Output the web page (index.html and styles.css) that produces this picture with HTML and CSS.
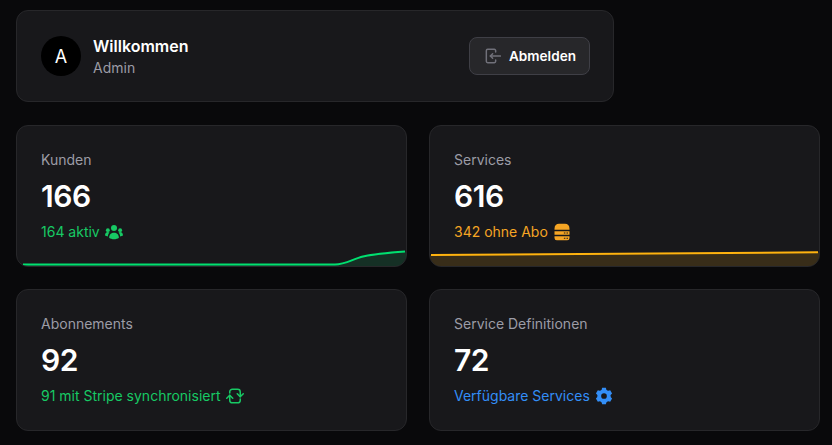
FILE: index.html
```html
<!DOCTYPE html>
<html lang="de">
  <head>
    <title>Dashboard</title>
    <meta charset="UTF-8" />
    <meta name="viewport" content="width=device-width, initial-scale=1.0" />
    <link rel="stylesheet" href="styles.css">
  </head>
  <body>
    <div class="page">
      <div class="welcome-card">
        <div class="user">
          <div class="avatar">A</div>
          <div>
            <p class="user-title">Willkommen</p>
            <p class="user-role">Admin</p>
          </div>
        </div>
        <button class="logout-button">
          <svg class="logout-icon" viewBox="0 0 24 24" fill="none" stroke="currentColor" stroke-width="2.2" stroke-linecap="round" stroke-linejoin="round">
            <path d="M16 6V4a2 2 0 0 0-2-2H4a2 2 0 0 0-2 2v16a2 2 0 0 0 2 2h10a2 2 0 0 0 2-2v-2"/>
            <path d="M23 12H8"/>
            <path d="M11.500 8.500L8 12l3.500 3.500"/>
          </svg>
          Abmelden
        </button>
      </div>

      <div class="stats-grid">
        <div class="stat-card">
          <p class="stat-label">Kunden</p>
          <p class="stat-value">166</p>
          <p class="stat-note green">164 aktiv
            <svg class="note-icon" viewBox="0 0 24 24" fill="currentColor">
              <circle cx="12" cy="6.500" r="4"/>
              <circle cx="3.800" cy="9.500" r="2.600"/>
              <circle cx="20.200" cy="9.500" r="2.600"/>
              <path d="M5.500 19.500c0-3.800 2.800-6.500 6.500-6.500s6.500 2.700 6.500 6.500c-1.500 1.300-4 2-6.500 2s-5-.7-6.500-2z"/>
              <path d="M3.800 18C2.200 17.800 1 17.300 0 16.700c0-2.700 1.500-4.700 3.800-4.700.9 0 1.600.3 2.200.7-1.300 1.300-2 3.100-2.200 5.300z"/>
              <path d="M20.200 18c1.600-.2 2.800-.7 3.800-1.300 0-2.700-1.500-4.700-3.800-4.700-.9 0-1.600.3-2.200.7 1.300 1.300 2 3.100 2.200 5.300z"/>
            </svg>
          </p>
          <svg class="spark" viewBox="0 0 389 30" preserveAspectRatio="none">
            <path class="spark-fill-green" d="M0 28.500H318C328 28.500 336 23 346 20.500C358 17.800 374 16.500 389 15.500V30H0Z"/>
            <path class="spark-line-green" d="M6 28.500H318C328 28.500 336 23 346 20.500C358 17.800 374 16.500 388 15.500"/>
          </svg>
        </div>

        <div class="stat-card">
          <p class="stat-label">Services</p>
          <p class="stat-value">616</p>
          <p class="stat-note orange">342 ohne Abo
            <svg class="note-icon" viewBox="0 0 24 24" fill="currentColor">
              <path d="M8 1h8c3.500 0 6 2.500 6 6.500V9H2V7.500C2 3.500 4.500 1 8 1z"/>
              <path fill-rule="evenodd" d="M2 11h20v4.500H2zM14.500 12.500v1.500h2v-1.500zM18 12.500v1.500h2v-1.500z"/>
              <path fill-rule="evenodd" d="M2 17.500h20V20a3 3 0 0 1-3 3H5a3 3 0 0 1-3-3zM14.500 19.500V21h2v-1.500zM18 19.500V21h2v-1.500z"/>
            </svg>
          </p>
          <svg class="spark" viewBox="0 0 389 30" preserveAspectRatio="none">
            <path class="spark-fill-orange" d="M0 19L389 16.300V30H0Z"/>
            <path class="spark-line-orange" d="M1 19L388 16.300"/>
          </svg>
        </div>

        <div class="stat-card">
          <p class="stat-label">Abonnements</p>
          <p class="stat-value">92</p>
          <p class="stat-note green">91 mit Stripe synchronisiert
            <svg class="note-icon" viewBox="0 0 24 24" fill="none" stroke="currentColor" stroke-width="2" stroke-linecap="round" stroke-linejoin="round">
              <path d="M5 8V6.500a3.500 3.500 0 0 1 3.500-3.500h7a3.500 3.500 0 0 1 3.500 3.500V13"/>
              <path d="M15 9l4 4 4-4"/>
              <path d="M19 16v1.500a3.500 3.500 0 0 1-3.500 3.500h-7A3.500 3.500 0 0 1 5 17.500V11"/>
              <path d="M1 15l4-4 4 4"/>
            </svg>
          </p>
        </div>

        <div class="stat-card">
          <p class="stat-label">Service Definitionen</p>
          <p class="stat-value">72</p>
          <p class="stat-note blue">Verfügbare Services
            <svg class="note-icon" viewBox="0 0 24 24" fill="currentColor">
              <circle cx="12" cy="12" r="8.800"/>
              <path d="M9.500 1h5l1 4v14l-1 4h-5l-1-4V5z"/>
              <path d="M9.500 1h5l1 4v14l-1 4h-5l-1-4V5z" transform="rotate(60 12 12)"/>
              <path d="M9.500 1h5l1 4v14l-1 4h-5l-1-4V5z" transform="rotate(120 12 12)"/>
              <circle class="gear-hole" cx="12" cy="12" r="3.800"/>
            </svg>
          </p>
        </div>
      </div>
    </div>
  </body>
</html>
```

FILE: styles.css
```css
* {
  margin: 0;
  padding: 0;
  box-sizing: border-box;
}

body {
  font-family: 'Inter', 'Liberation Sans', sans-serif;
  background: #09090b;
  color: #fff;
  overflow: hidden;
}

.page {
  padding: 10px 12px 0 16px;
}

.welcome-card {
  width: 598px;
  height: 92px;
  padding: 0 23px 0 24px;
  display: flex;
  align-items: center;
  justify-content: space-between;
  background: #18181b;
  border: 1px solid #27272a;
  border-radius: 12px;
}

.user {
  display: flex;
  align-items: center;
  gap: 12px;
}

.avatar {
  width: 40px;
  height: 40px;
  border-radius: 50%;
  background: #000;
  display: flex;
  align-items: center;
  justify-content: center;
  font-size: 18px;
}

.user-title {
  font-size: 16px;
  font-weight: 600;
  line-height: 24px;
}

.user-role {
  font-size: 14px;
  line-height: 20px;
  color: #9c9ca6;
}

.logout-button {
  height: 38px;
  padding: 0 13px 0 15px;
  display: flex;
  align-items: center;
  gap: 8px;
  font-family: inherit;
  font-size: 13.6px;
  font-weight: 600;
  color: #fff;
  background: #27272a;
  border: 1px solid #3f3f46;
  border-radius: 8px;
}

.logout-icon {
  width: 16px;
  height: 16px;
  color: #71717a;
}

.stats-grid {
  margin-top: 23px;
  display: grid;
  grid-template-columns: 391px 391px;
  grid-auto-rows: 142px;
  gap: 22px;
}

.stat-card {
  position: relative;
  overflow: hidden;
  padding: 24px;
  background: #18181b;
  border: 1px solid #27272a;
  border-radius: 12px;
}

.stat-label {
  font-size: 14px;
  line-height: 20px;
  color: #9c9ca6;
}

.stat-value {
  margin-top: 8px;
  font-size: 30px;
  font-weight: 600;
  line-height: 36px;
  letter-spacing: -0.5px;
}

.stat-note {
  margin-top: 8px;
  display: flex;
  align-items: center;
  gap: 5px;
  font-size: 14px;
  line-height: 20px;
}

.note-icon {
  width: 18px;
  height: 18px;
  flex-shrink: 0;
}

.green { color: #17c964; }
.orange { color: #f5a524; }
.blue { color: #338ef7; }

.gear-hole { fill: #18181b; }

/* Sparkline sits over the bottom of the card */
.spark {
  position: absolute;
  left: 0;
  bottom: 0;
  width: 100%;
  height: 30px;
}

.spark-line-green,
.spark-line-orange {
  fill: none;
  stroke-width: 2;
}

.spark-line-green { stroke: #00e070; }
.spark-fill-green { fill: rgba(0, 224, 112, 0.12); }
.spark-line-orange { stroke: #ffb30f; }
.spark-fill-orange { fill: rgba(255, 179, 15, 0.14); }
```
